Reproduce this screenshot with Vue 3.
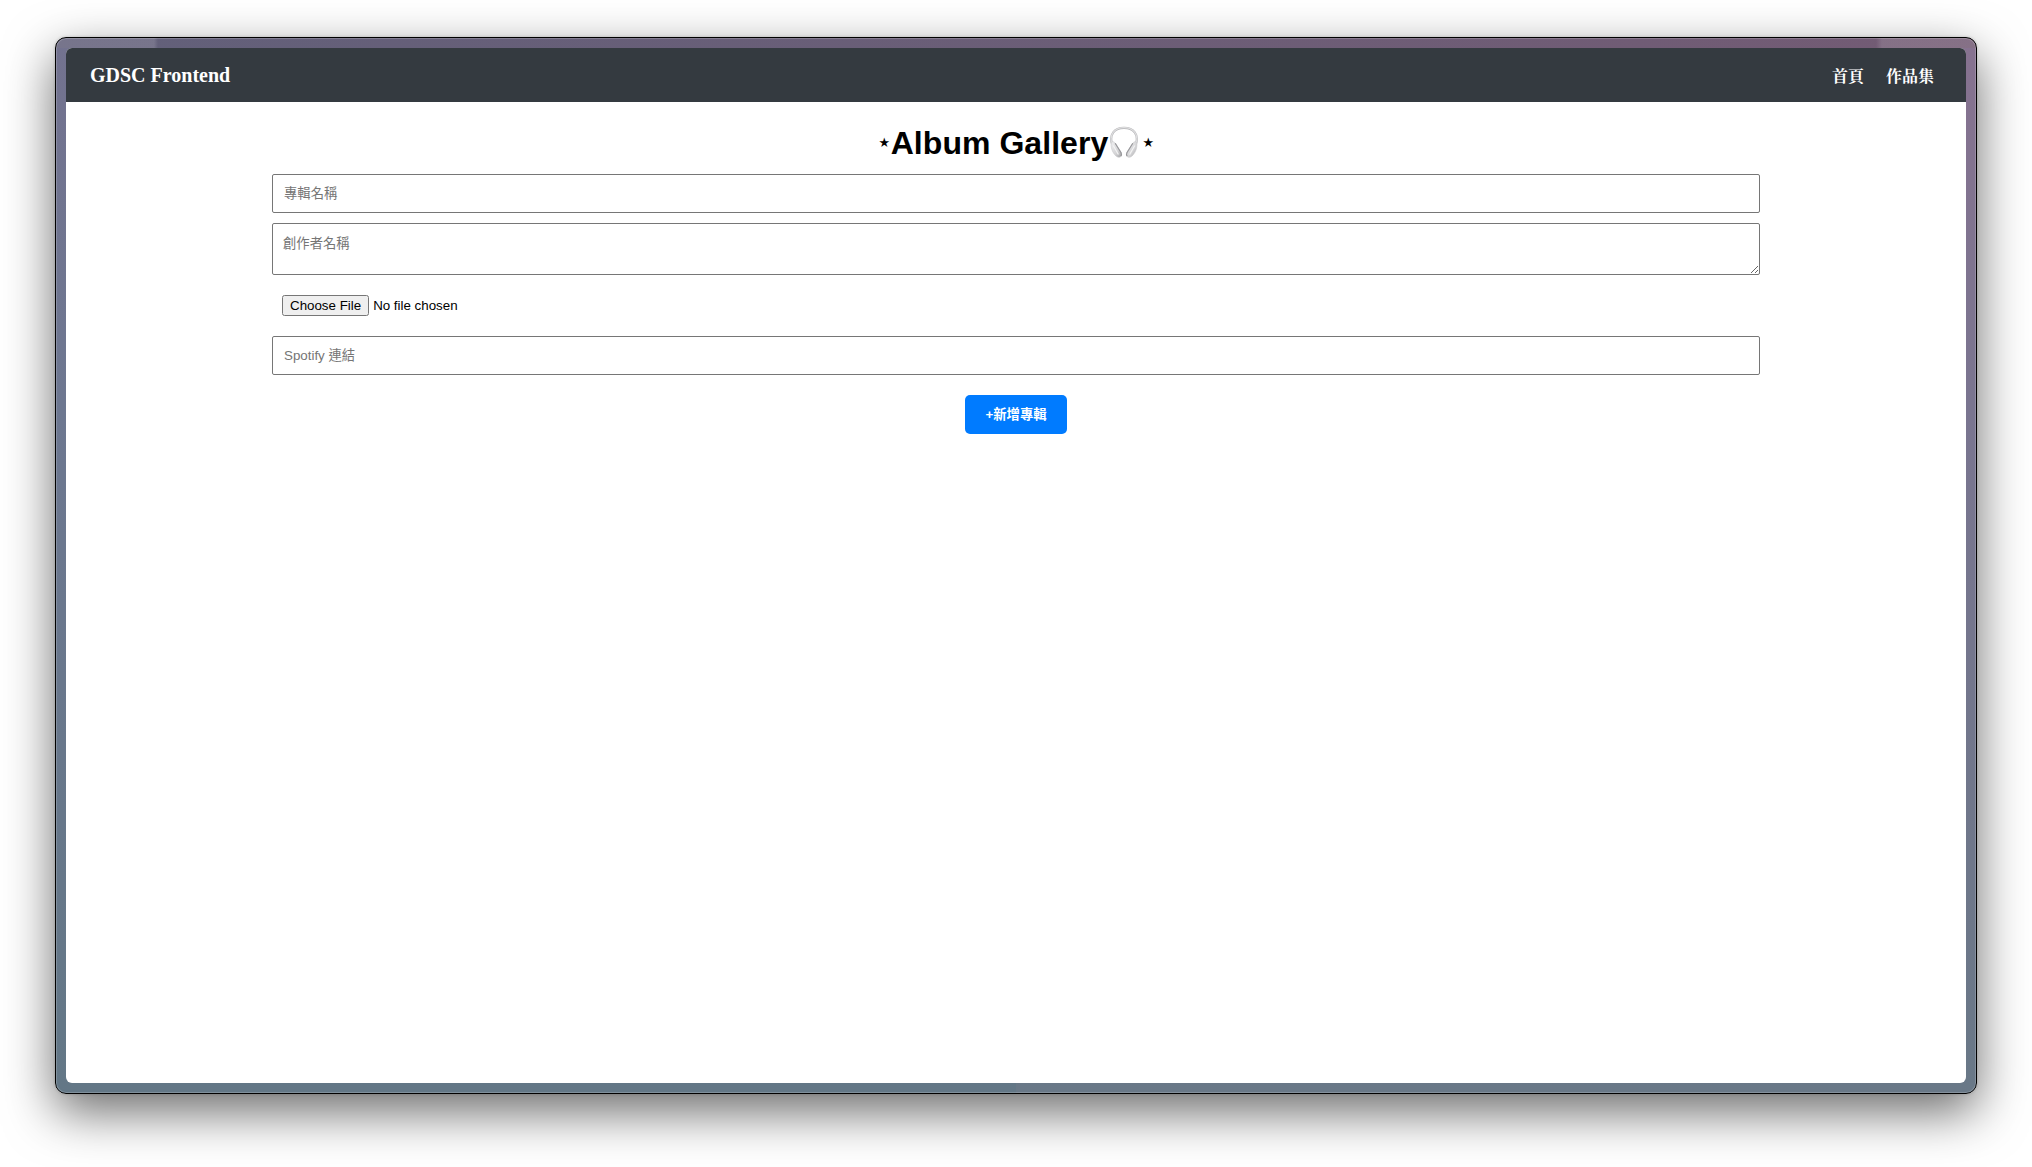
<script setup>
const links = ['首頁', '作品集']
</script>

<template>
  <div class="desktop">
    <div class="window">
      <div class="page">
        <nav class="navbar">
          <span class="brand">GDSC Frontend</span>
          <div class="links">
            <a v-for="link in links" :key="link">{{ link }}</a>
          </div>
        </nav>
        <h1 class="title">
          <span class="star">⋆</span><span class="name">Album Gallery</span>
          <svg class="headphones" viewBox="0 0 28 34">
            <defs>
              <linearGradient id="cup" x1="0" y1="0" x2="1" y2="1">
                <stop offset="0" stop-color="#f0f0f1" />
                <stop offset="0.6" stop-color="#d4d4d6" />
                <stop offset="1" stop-color="#a4a4a7" />
              </linearGradient>
            </defs>
            <path d="M2.200 18.500C-1.200 8.500 4.500 1.900 14 1.900s15.200 6.600 11.800 16.600" fill="none" stroke="#b4b4b7" stroke-width="2.200" />
            <path d="M2 18C-1.100 8.300 4.700 1.600 14 1.600s15.100 6.700 12 16.400" fill="none" stroke="#dededf" stroke-width="1.200" />
            <path d="M1.400 16.300c1.300-1 2.800-.5 3.700.7l6 9.600c.9 1.900.5 3.900-1.100 4.500-1.800.7-3.700-.4-5.400-2.500C2.200 25.700.300 20.500 1.400 16.300Z" fill="url(#cup)" stroke="#c2c2c4" stroke-width=".5" />
            <path d="M26.600 16.300c-1.300-1-2.800-.5-3.700.7l-6 9.600c-.9 1.900-.5 3.900 1.100 4.500 1.800.7 3.700-.4 5.400-2.500 2.400-2.900 4.300-8.100 3.200-12.300Z" fill="url(#cup)" stroke="#c2c2c4" stroke-width=".5" />
            <path d="M5.200 17.200l5.900 9.600c.6 1.400.4 2.600-.3 3.400M22.800 17.200l-5.900 9.600c-.6 1.400-.4 2.600.3 3.400" fill="none" stroke="#98989b" stroke-width="1.200" />
            <path d="M3.200 19.500l5.200 9M24.800 19.500l-5.200 9" fill="none" stroke="#f4f4f4" stroke-width="1.200" />
          </svg>
          <span class="star">⋆</span>
        </h1>
        <form class="form" @submit.prevent>
          <input type="text" placeholder="專輯名稱" />
          <textarea placeholder="創作者名稱"></textarea>
          <input type="file" />
          <input type="text" placeholder="Spotify 連結" />
          <button>+新增專輯</button>
        </form>
      </div>
    </div>
  </div>
</template>

<style>
body {
  margin: 0;
  background: #fff;
}
</style>

<style scoped>
.desktop {
  box-sizing: border-box;
  width: 2032px;
  height: 1167px;
  padding: 37px 55px 73px;
  overflow: hidden;
  background: #fff;
}
.window {
  box-sizing: border-box;
  height: 1057px;
  padding: 10px;
  border: 1px solid #000;
  border-radius: 11px;
  background:
    linear-gradient(90deg, #ffffff22 0 98px, transparent 102px 1820px, #ffffff22 1826px) top / 100% 10px no-repeat,
    linear-gradient(90deg, #62607a, #735b74) top / 100% 10px no-repeat,
    linear-gradient(180deg, #73728f, #6d7790 35%, #637786) left / 50% 100% no-repeat,
    linear-gradient(180deg, #877290, #7a7590 35%, #697887) right / 50% 100% no-repeat;
  box-shadow:
    inset 0 0 0 1px #ffffff30,
    0 18px 50px rgba(0, 0, 0, 0.58),
    0 0 3px rgba(0, 0, 0, 0.2);
}
.page {
  height: 1035px;
  overflow: hidden;
  border-radius: 6px;
  background: #fff;
}
.navbar {
  box-sizing: border-box;
  display: flex;
  align-items: center;
  justify-content: space-between;
  height: 54px;
  padding: 0 32px 0 24px;
  color: #fff;
  background: #343a40;
  font-family: "Liberation Serif", "Noto Serif CJK TC", "Noto Sans CJK TC", serif;
  font-weight: 700;
}
.brand {
  padding-top: 1px;
  font-size: 20px;
}
.links {
  display: flex;
  gap: 22px;
  font-size: 16px;
}
.title {
  display: flex;
  align-items: center;
  justify-content: center;
  height: 37px;
  margin: 22px 0 13px;
  padding-left: 1px;
  font: 700 32px/37px "Liberation Sans", sans-serif;
}
.name {
  padding-top: 2px;
  letter-spacing: 0.05px;
}
.star {
  display: flex;
  justify-content: center;
  width: 12px;
  font-size: 20px;
}
.headphones {
  width: 28px;
  height: 34px;
  margin: 0 4px 0 2px;
}
.form {
  display: flex;
  flex-direction: column;
  align-items: center;
  width: 1488px;
  margin: 0 auto;
}
input,
textarea,
button {
  box-sizing: border-box;
  font-family: "Liberation Sans", "Noto Sans CJK TC", sans-serif;
  font-size: 13.333px;
}
input[type="text"],
textarea {
  width: 100%;
  margin: 0;
  border: 1px solid #767676;
  border-radius: 2px;
  background: #fff;
}
input[type="text"] {
  height: 39px;
  padding: 0 11px;
}
textarea {
  height: 52px;
  margin-top: 10px;
  padding: 9px 10px;
}
::placeholder {
  color: #757575;
}
input[type="file"] {
  width: 100%;
  height: 41px;
  margin: 10px 0;
  padding: 10px;
}
button {
  width: 102px;
  height: 39px;
  margin-top: 20px;
  padding: 0 0 2px;
  color: #fff;
  background: #007bff;
  border: 0;
  border-radius: 5px;
  font-weight: 700;
}
</style>
